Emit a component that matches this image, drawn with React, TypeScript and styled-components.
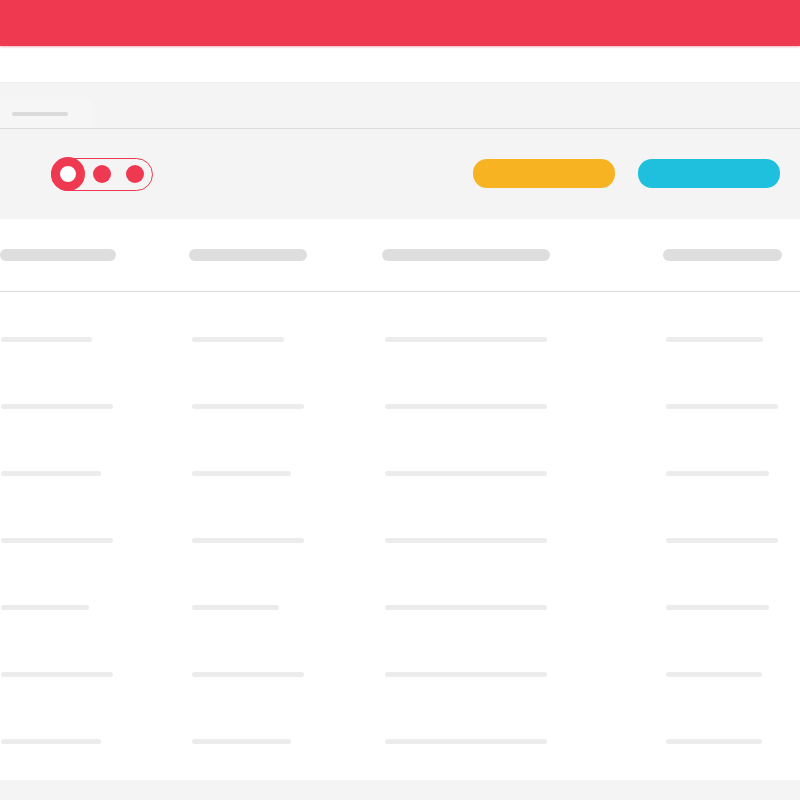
import React from 'react';
import styled, { createGlobalStyle } from 'styled-components';

const GlobalStyle = createGlobalStyle`
  html, body {
    margin: 0;
    padding: 0;
    background: #ffffff;
    font-family: 'Liberation Sans', Arial, sans-serif;
  }
`;

const Page = styled.div`
  width: 800px;
  height: 800px;
  display: flex;
  flex-direction: column;
  overflow: hidden;
  background: #ffffff;
`;

const TopBar = styled.header`
  height: 46px;
  flex-shrink: 0;
  background: #ef3950;
  box-shadow: 0 1px 2px rgba(200, 40, 60, 0.35);
  position: relative;
  z-index: 1;
`;

const SubHeader = styled.div`
  height: 36px;
  flex-shrink: 0;
  background: #ffffff;
`;

const TabStrip = styled.div`
  height: 45px;
  flex-shrink: 0;
  display: flex;
  align-items: flex-end;
  background: #f4f4f4;
  border-top: 1px solid #ededed;
  border-bottom: 1px solid #dcdcdc;
`;

const Tab = styled.div`
  width: 92px;
  height: 28px;
  display: flex;
  align-items: center;
  padding-left: 12px;
  box-sizing: border-box;
  background: #f6f6f6;
`;

const TabLabel = styled.span`
  display: block;
  width: 56px;
  height: 4px;
  border-radius: 2px;
  background: #dadada;
  margin-top: -1px;
`;

const Toolbar = styled.div`
  height: 90px;
  flex-shrink: 0;
  display: flex;
  align-items: center;
  justify-content: space-between;
  padding: 0 20px 0 51px;
  background: #f4f4f4;
`;

const Toggle = styled.div`
  display: flex;
  align-items: center;
  width: 102px;
  height: 33px;
  box-sizing: border-box;
  border: 1px solid #ef3950;
  border-radius: 17px;
`;

const Ring = styled.span`
  width: 34px;
  height: 34px;
  box-sizing: border-box;
  border: 9px solid #ef3950;
  border-radius: 50%;
  background: #ffffff;
  margin-left: -1px;
  flex-shrink: 0;
`;

const Dot = styled.span<{ $gap: number }>`
  width: 18px;
  height: 18px;
  border-radius: 50%;
  background: #ef3950;
  margin-left: ${(p) => p.$gap}px;
  flex-shrink: 0;
`;

const Actions = styled.div`
  display: flex;
  gap: 23px;
  margin-top: -1px;
`;

const PillButton = styled.button<{ $color: string }>`
  width: 142px;
  height: 29px;
  border: none;
  border-radius: 14px;
  padding: 0;
  background: ${(p) => p.$color};
  cursor: pointer;
`;

const HeadRow = styled.div`
  height: 72px;
  flex-shrink: 0;
  display: grid;
  grid-template-columns: 189px 193px 281px 1fr;
  align-items: center;
  border-bottom: 1px solid #dddddd;
  background: #ffffff;
`;

const HeadBar = styled.span<{ $w: number }>`
  display: block;
  width: ${(p) => p.$w}px;
  height: 12px;
  border-radius: 6px;
  background: #dedede;
`;

const Body = styled.div`
  flex: 1;
  display: flex;
  flex-direction: column;
  background: #ffffff;
`;

const Row = styled.div`
  height: 67px;
  flex-shrink: 0;
  display: grid;
  grid-template-columns: 191px 193px 281px 1fr;
  align-items: start;
  padding: 45px 0 0 1px;
  box-sizing: border-box;
`;

const CellBar = styled.span<{ $w: number }>`
  display: block;
  width: ${(p) => p.$w}px;
  height: 5px;
  border-radius: 3px;
  background: #ececec;
`;

const Footer = styled.footer`
  height: 20px;
  flex-shrink: 0;
  background: #f4f4f4;
`;

const headWidths = [116, 118, 168, 119];

const rows: number[][] = [
  [91, 92, 162, 97],
  [112, 112, 162, 112],
  [100, 99, 162, 103],
  [112, 112, 162, 112],
  [88, 87, 162, 103],
  [112, 112, 162, 96],
  [100, 99, 162, 96],
];

const App: React.FC = () => {
  return (
    <>
      <GlobalStyle />
      <Page>
        <TopBar />
        <SubHeader />
        <TabStrip>
          <Tab>
            <TabLabel />
          </Tab>
        </TabStrip>
        <Toolbar>
          <Toggle>
            <Ring />
            <Dot $gap={8} />
            <Dot $gap={15} />
          </Toggle>
          <Actions>
            <PillButton $color="#f7b322" aria-label="secondary" />
            <PillButton $color="#1ec0de" aria-label="primary" />
          </Actions>
        </Toolbar>
        <HeadRow>
          {headWidths.map((w, i) => (
            <HeadBar key={i} $w={w} />
          ))}
        </HeadRow>
        <Body>
          {rows.map((cells, i) => (
            <Row key={i}>
              {cells.map((w, j) => (
                <CellBar key={j} $w={w} />
              ))}
            </Row>
          ))}
        </Body>
        <Footer />
      </Page>
    </>
  );
};

export default App;
